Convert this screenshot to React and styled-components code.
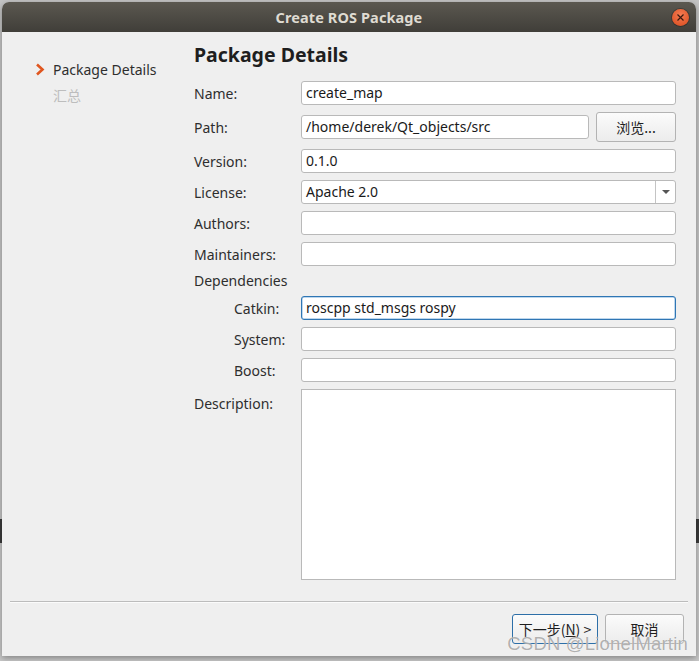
import React from 'react';
import styled, { createGlobalStyle } from 'styled-components';

const GlobalStyle = createGlobalStyle`
  html, body {
    margin: 0;
    padding: 0;
  }
  body {
    width: 699px;
    height: 661px;
    overflow: hidden;
    background: linear-gradient(#c4c4c4 0, #c4c4c4 519px, #3b3b3b 519px, #3b3b3b 543px, #c8c8c8 543px);
    font-family: "Noto Sans", "Noto Sans CJK SC", sans-serif;
  }
`;

const Window = styled.div`
  position: relative;
  margin: 2px 0 0 2px;
  width: 694px;
  height: 654px;
  background: #efefef;
  border-radius: 7px 7px 0 0;
  box-shadow: 0 2px 6px rgba(0, 0, 0, 0.35);
  display: flex;
  flex-direction: column;
  overflow: hidden;
`;

const TitleBar = styled.div`
  height: 30px;
  flex: none;
  background: linear-gradient(#5b5850, #403e39);
  display: flex;
  align-items: center;
  justify-content: center;
  position: relative;
  color: #dfdbd2;
  font-family: "Noto Sans", sans-serif;
  font-weight: bold;
  font-size: 14.5px;
  letter-spacing: 0.1px;
`;

const CloseButton = styled.div`
  position: absolute;
  right: 7px;
  top: 7px;
  width: 17px;
  height: 17px;
  border-radius: 50%;
  background: radial-gradient(circle at 50% 35%, #f47b52, #d84a1d);
  box-shadow: 0 0 0 1px rgba(0, 0, 0, 0.25);
  display: flex;
  align-items: center;
  justify-content: center;
`;

const Body = styled.div`
  flex: 1;
  display: flex;
  min-height: 0;
`;

const Sidebar = styled.div`
  width: 192px;
  flex: none;
  padding: 27px 0 0 33px;
  box-sizing: border-box;
  display: flex;
  flex-direction: column;
  gap: 6px;
`;

const NavItem = styled.div`
  display: flex;
  align-items: center;
  height: 20px;
  font-size: 14px;
  color: ${p => (p.active ? '#2e2e2e' : '#bdbdbd')};
`;

const NavMark = styled.span`
  width: 18px;
  flex: none;
  display: flex;
  align-items: center;
`;

const Main = styled.div`
  flex: 1;
  padding: 9px 20px 0 0;
  display: flex;
  flex-direction: column;
`;

const Heading = styled.div`
  font-size: 19.5px;
  font-weight: bold;
  color: #1e1e1e;
  height: 28px;
  line-height: 28px;
  margin-bottom: 12px;
`;

const Form = styled.div`
  display: grid;
  grid-template-columns: 107px 1fr;
  row-gap: 7px;
  align-items: center;
`;

const Label = styled.div`
  font-size: 14px;
  color: #2e2e2e;
  padding-left: ${p => (p.indent ? '40px' : '0')};
  align-self: ${p => (p.top ? 'start' : 'center')};
  padding-top: ${p => (p.top ? '5px' : '0')};
`;

const Section = styled.div`
  grid-column: 1 / span 2;
  font-size: 14px;
  color: #2e2e2e;
  height: 16px;
  line-height: 16px;
`;

const Field = styled.div`
  height: 24px;
  box-sizing: border-box;
  background: #fff;
  border: 1px solid ${p => (p.focus ? '#2f76b4' : '#b9b9b9')};
  box-shadow: ${p => (p.focus ? 'inset 0 0 0 0.5px #7fb0dc' : 'none')};
  border-radius: 3px;
  padding: 0 4px;
  font-size: 14px;
  line-height: 22px;
  color: #1a1a1a;
  white-space: nowrap;
`;

const TextArea = styled(Field)`
  height: 191px;
  border-radius: 0;
`;

const PathRow = styled.div`
  display: flex;
  align-items: center;
  gap: 7px;
`;

const PathField = styled(Field)`
  flex: 1;
`;

const Combo = styled(Field)`
  display: flex;
  padding: 0;
`;

const ComboText = styled.div`
  flex: 1;
  padding: 0 4px;
`;

const ComboArrow = styled.div`
  width: 19px;
  border-left: 1px solid #c4c4c4;
  display: flex;
  align-items: center;
  justify-content: center;
`;

const Button = styled.div`
  width: ${p => p.w}px;
  height: 30px;
  box-sizing: border-box;
  border: 1px solid ${p => (p.primary ? '#2d6fa8' : '#b3b3b3')};
  border-radius: 3px;
  background: linear-gradient(#fbfbfb, #ececec);
  display: flex;
  align-items: center;
  justify-content: center;
  font-family: "Noto Sans CJK SC", "Noto Sans", sans-serif;
  font-size: 14px;
  color: #1e1e1e;
`;

const Footer = styled.div`
  flex: none;
  box-sizing: border-box;
  height: 55px;
  margin: 0 8px;
  border-top: 1px solid #bcbcbc;
  box-shadow: inset 0 1px 0 #fbfbfb;
  display: flex;
  justify-content: flex-end;
  align-items: flex-start;
  padding: 12px 4px 0 0;
  gap: 7px;
  position: relative;
`;

const Mnemonic = styled.span`
  text-decoration: underline;
`;

const Watermark = styled.div`
  position: absolute;
  right: 0;
  bottom: 1px;
  font-family: "Liberation Sans", sans-serif;
  font-size: 18.5px;
  color: rgba(110, 110, 110, 0.55);
  text-shadow: 0 0 1px #fff;
  letter-spacing: 0.2px;
`;

export default function App() {
  return (
    <>
      <GlobalStyle />
      <Window>
        <TitleBar>
          Create ROS Package
          <CloseButton>
            <svg width="7" height="7" viewBox="0 0 7 7">
              <path d="M0.5 0.5 L6.5 6.5 M6.5 0.5 L0.5 6.5" stroke="#3a1a10" strokeWidth="1.2" />
            </svg>
          </CloseButton>
        </TitleBar>
        <Body>
          <Sidebar>
            <NavItem active>
              <NavMark>
                <svg width="10" height="13" viewBox="0 0 10 13">
                  <path d="M2 1.5 L7.5 6.5 L2 11.5" fill="none" stroke="#e0561f" strokeWidth="2.6" />
                </svg>
              </NavMark>
              Package Details
            </NavItem>
            <NavItem>
              <NavMark />
              汇总
            </NavItem>
          </Sidebar>
          <Main>
            <Heading>Package Details</Heading>
            <Form>
              <Label>Name:</Label>
              <Field>create_map</Field>
              <Label>Path:</Label>
              <PathRow>
                <PathField>/home/derek/Qt_objects/src</PathField>
                <Button w={80}>浏览...</Button>
              </PathRow>
              <Label>Version:</Label>
              <Field>0.1.0</Field>
              <Label>License:</Label>
              <Combo>
                <ComboText>Apache 2.0</ComboText>
                <ComboArrow>
                  <svg width="8" height="4" viewBox="0 0 8 4">
                    <path d="M0 0 H8 L4 4 Z" fill="#555" />
                  </svg>
                </ComboArrow>
              </Combo>
              <Label>Authors:</Label>
              <Field />
              <Label>Maintainers:</Label>
              <Field />
              <Section>Dependencies</Section>
              <Label indent>Catkin:</Label>
              <Field focus>roscpp std_msgs rospy</Field>
              <Label indent>System:</Label>
              <Field />
              <Label indent>Boost:</Label>
              <Field />
              <Label top>Description:</Label>
              <TextArea />
            </Form>
          </Main>
        </Body>
        <Footer>
          <Button primary w={86}>
            下一步(<Mnemonic>N</Mnemonic>) &gt;
          </Button>
          <Button w={79}>取消</Button>
          <Watermark>CSDN @LionelMartin</Watermark>
        </Footer>
      </Window>
    </>
  );
}
